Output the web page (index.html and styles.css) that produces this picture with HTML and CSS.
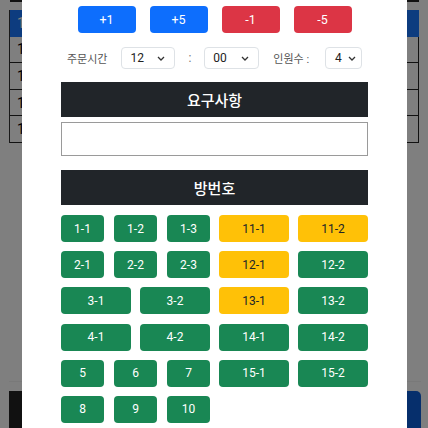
FILE: index.html
```html
<!DOCTYPE html>
<html lang="ko">
<head>
<meta charset="utf-8">
<link rel="stylesheet" href="styles.css">
</head>
<body>
<div class="page">
  <div class="topband"></div>
  <div class="table">
    <div class="trow head"><span>1</span></div>
    <div class="trow"><span>1</span></div>
    <div class="trow"><span>1</span></div>
    <div class="trow"><span>1</span></div>
    <div class="trow"><span>1</span></div>
  </div>
  <div class="footer">
    <div class="fbtn dark"></div>
    <div class="fbtn blue"></div>
  </div>
</div>
<div class="backdrop"></div>
<div class="modal">
  <div class="qty">
    <button class="btn primary">+1</button>
    <button class="btn primary">+5</button>
    <button class="btn danger">-1</button>
    <button class="btn danger">-5</button>
  </div>
  <div class="time">
    <span class="lbl">주문시간</span>
    <div class="sel w54"><span>12</span><svg width="8" height="5" viewBox="0 0 8 5"><path d="M1 1l3 3 3-3" fill="none" stroke="#333" stroke-width="1.3"/></svg></div>
    <span class="colon">:</span>
    <div class="sel w55"><span>00</span><svg width="8" height="5" viewBox="0 0 8 5"><path d="M1 1l3 3 3-3" fill="none" stroke="#333" stroke-width="1.3"/></svg></div>
    <span class="lbl lbl2">인원수 :</span>
    <div class="sel w37"><span>4</span><svg width="8" height="5" viewBox="0 0 8 5"><path d="M1 1l3 3 3-3" fill="none" stroke="#333" stroke-width="1.3"/></svg></div>
  </div>
  <div class="bar">요구사항</div>
  <div class="memo"></div>
  <div class="bar bar2">방번호</div>
  <div class="rooms">
    <div class="rrow">
      <div class="half three"><span class="room g">1-1</span><span class="room g">1-2</span><span class="room g">1-3</span></div>
      <div class="half two"><span class="room y">11-1</span><span class="room y">11-2</span></div>
    </div>
    <div class="rrow">
      <div class="half three"><span class="room g">2-1</span><span class="room g">2-2</span><span class="room g">2-3</span></div>
      <div class="half two"><span class="room y">12-1</span><span class="room g">12-2</span></div>
    </div>
    <div class="rrow">
      <div class="half two"><span class="room g">3-1</span><span class="room g">3-2</span></div>
      <div class="half two"><span class="room y">13-1</span><span class="room g">13-2</span></div>
    </div>
    <div class="rrow">
      <div class="half two"><span class="room g">4-1</span><span class="room g">4-2</span></div>
      <div class="half two"><span class="room g">14-1</span><span class="room g">14-2</span></div>
    </div>
    <div class="rrow">
      <div class="half three"><span class="room g">5</span><span class="room g">6</span><span class="room g">7</span></div>
      <div class="half two"><span class="room g">15-1</span><span class="room g">15-2</span></div>
    </div>
    <div class="rrow">
      <div class="half three"><span class="room g">8</span><span class="room g">9</span><span class="room g">10</span></div>
      <div class="half two"></div>
    </div>
  </div>
</div>
</body>
</html>
```
FILE: styles.css
```css
* { box-sizing: border-box; }
html, body { margin: 0; padding: 0; }
body {
  width: 428px;
  height: 428px;
  overflow: hidden;
  background: #fff;
  font-family: Roboto, "Noto Sans CJK KR", sans-serif;
}
.page {
  height: 428px;
  display: flex;
  flex-direction: column;
  padding: 0 7px 0 9px;
}
.topband {
  height: 2px;
  margin: 0 2px 0 1px;
  background: #222;
}
.table {
  margin: 8px 2px 0 0;
  border-left: 1px solid #333;
}
.trow {
  height: 26.6px;
  border-bottom: 1px solid #222;
  border-right: 1px solid #222;
  display: flex;
  align-items: center;
  padding-left: 7px;
  font-size: 14px;
  color: #000;
}
.trow.head {
  background: #1a78ff;
  color: #fff;
  border: none;
}
.footer {
  margin-top: auto;
  border-top: 1px solid #f2f2f2;
  padding-top: 9px;
  height: 47px;
  display: flex;
  justify-content: space-between;
}
.fbtn { width: 60px; height: 38px; }
.fbtn.dark { background: #222; }
.fbtn.blue { background: #0d5ed8; border-radius: 0 5px 0 0; }

.backdrop {
  position: fixed;
  inset: 0;
  background: rgba(0, 0, 0, 0.5);
}
.modal {
  position: fixed;
  left: 22px;
  top: 0;
  width: 385px;
  height: 428px;
  background: #fff;
  padding: 6px 39px 0;
}
.qty {
  display: flex;
  justify-content: center;
  gap: 14px;
}
.btn {
  width: 58px;
  height: 27px;
  border: none;
  border-radius: 4px;
  color: #fff;
  font-family: Roboto, sans-serif;
  font-size: 12.5px;
  padding: 0;
}
.btn.primary { background: #0d6efd; }
.btn.danger { background: #dc3545; }
.time {
  margin-top: 14px;
  height: 22px;
  display: flex;
  justify-content: center;
  align-items: center;
  gap: 14px;
  font-size: 11px;
  color: #444;
}
.lbl { font-size: 11px; color: #555; }
.lbl2 { margin-right: 2px; }
.colon { color: #777; font-size: 12px; margin: 0 -1px; }
.sel {
  height: 22px;
  border: 1px solid #dee2e6;
  border-radius: 4px;
  display: flex;
  align-items: center;
  justify-content: space-between;
  padding: 0 9px 0 8px;
  font-size: 12px;
  color: #222;
}
.sel svg { display: block; }
.w54 { width: 54px; }
.w55 { width: 55px; }
.w37 { width: 37px; padding: 0 0 0 9px; justify-content: flex-start; gap: 6px; }
.bar {
  margin-top: 13px;
  height: 35px;
  background: #212529;
  color: #fff;
  display: flex;
  align-items: center;
  justify-content: center;
  font-size: 15px;
  font-weight: 500;
}
.memo {
  margin-top: 5px;
  height: 34px;
  border: 1px solid #9a9a9a;
}
.bar2 { margin-top: 14px; }
.rooms {
  margin-top: 10px;
  display: flex;
  flex-direction: column;
  gap: 9.2px;
}
.rrow {
  display: flex;
  gap: 9px;
  height: 27px;
}
.half {
  flex: 1;
  display: flex;
}
.half.three { gap: 10px; }
.half.two { gap: 9px; }
.room {
  flex: 1;
  border-radius: 4px;
  display: flex;
  align-items: center;
  justify-content: center;
  font-size: 12px;
}
.room.g { background: #198754; color: #fff; }
.room.y { background: #ffc107; color: #212529; }
```
